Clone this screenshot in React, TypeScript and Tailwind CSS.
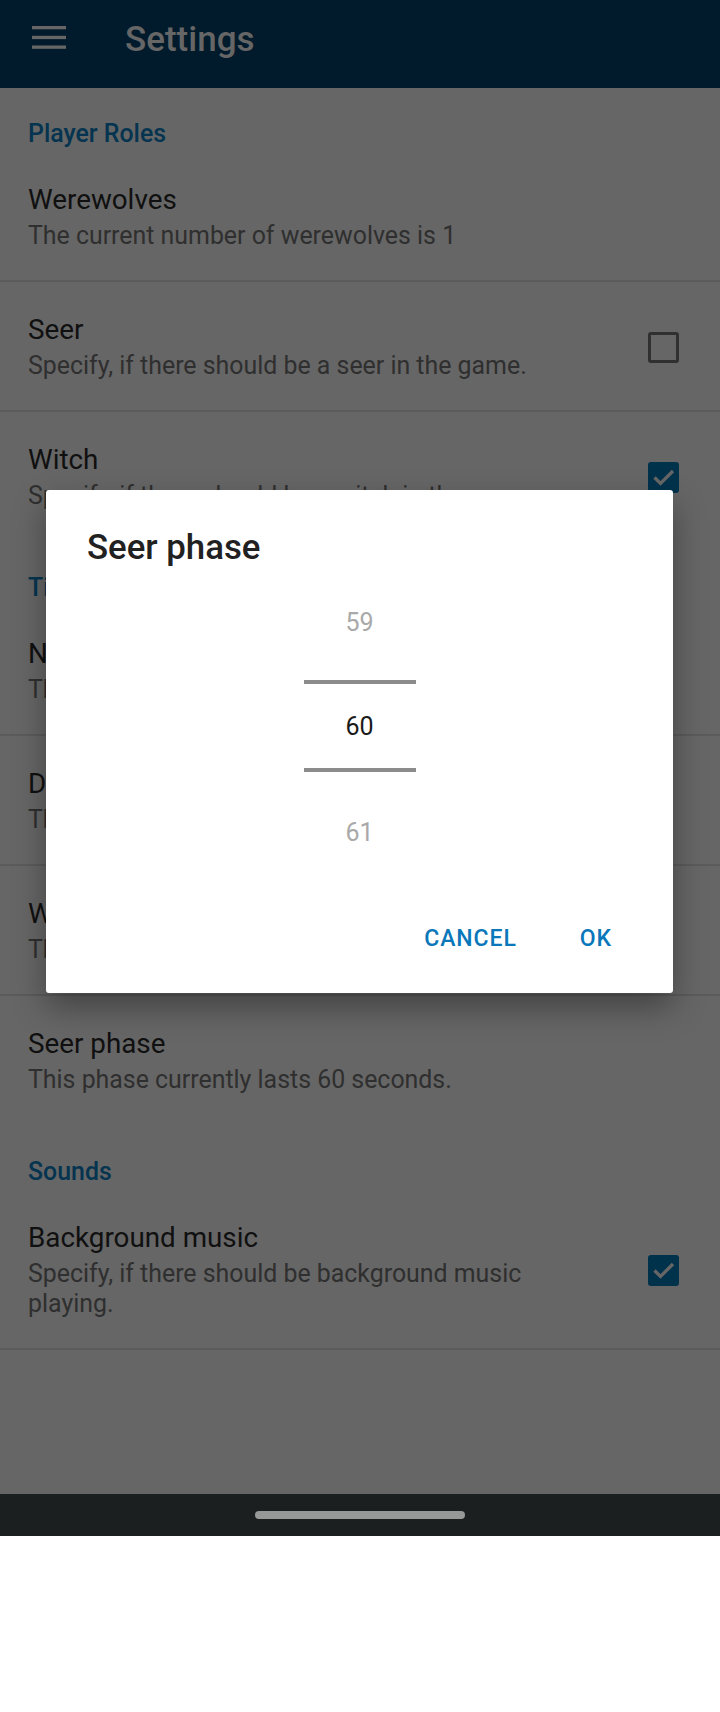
import React from 'react';

type Pref = {
  title: string;
  summary: string;
  checked?: boolean;
  divider: boolean;
};

type Section = {
  name: string;
  items: Pref[];
};

const sections: Section[] = [
  {
    name: 'Player Roles',
    items: [
      { title: 'Werewolves', summary: 'The current number of werewolves is 1', divider: true },
      { title: 'Seer', summary: 'Specify, if there should be a seer in the game.', checked: false, divider: true },
      { title: 'Witch', summary: 'Specify, if there should be a witch in the game.', checked: true, divider: false },
    ],
  },
  {
    name: 'Timers',
    items: [
      { title: 'Night phase', summary: 'This phase currently lasts 30 seconds.', divider: true },
      { title: 'Day phase', summary: 'This phase currently lasts 120 seconds.', divider: true },
      { title: 'Werewolf phase', summary: 'This phase currently lasts 60 seconds.', divider: true },
      { title: 'Seer phase', summary: 'This phase currently lasts 60 seconds.', divider: false },
    ],
  },
  {
    name: 'Sounds',
    items: [
      {
        title: 'Background music',
        summary: 'Specify, if there should be background music playing.',
        checked: true,
        divider: true,
      },
    ],
  },
];

const CheckBox: React.FC<{ checked: boolean }> = ({ checked }) =>
  checked ? (
    <div className="w-[31px] h-[31px] rounded-[3px] bg-[#01324c] flex items-center justify-center shrink-0">
      <svg width="31" height="31" viewBox="0 0 31 31">
        <path d="M6.5 15.5 L12.5 21.5 L25 9" fill="none" stroke="#666666" strokeWidth="3.3" />
      </svg>
    </div>
  ) : (
    <div className="w-[31px] h-[31px] rounded-[3px] border-[3px] border-[#303030] shrink-0" />
  );

const PrefRow: React.FC<{ pref: Pref }> = ({ pref }) => (
  <>
    <div className="flex items-center pl-[28px] pr-[41px] pt-[31px] pb-[29px]">
      <div className="flex-1 min-w-0 pr-[56px]">
        <div className="text-[27.8px] leading-[34px] text-[#101010]">{pref.title}</div>
        <div className="mt-[4px] text-[24.9px] leading-[30px] text-[#2f2f2f]">{pref.summary}</div>
      </div>
      {pref.checked !== undefined && <CheckBox checked={pref.checked} />}
    </div>
    <div className={pref.divider ? 'h-[2px] bg-[#5b5b5b]' : 'h-[2px]'} />
  </>
);

const App: React.FC = () => {
  return (
    <div className="relative w-[720px] h-[1712px] bg-white font-['Roboto',sans-serif]">
      <div className="h-[1536px] flex flex-col bg-[#666666]">
        {/* toolbar */}
        <div className="h-[88px] shrink-0 bg-[#011b2c] flex items-start">
          <svg className="ml-[32px] mt-[26px]" width="34" height="23" viewBox="0 0 34 23">
            <rect x="0" y="0" width="34" height="3.3" fill="#666666" />
            <rect x="0" y="9.8" width="34" height="3.3" fill="#666666" />
            <rect x="0" y="19.5" width="34" height="3.3" fill="#666666" />
          </svg>
          <div className="ml-[59px] mt-[20px] text-[35px] leading-[40px] font-medium text-[#666666]">
            Settings
          </div>
        </div>

        {/* preference list */}
        <div className="flex-1">
          {sections.map(section => (
            <div key={section.name}>
              <div className="pl-[28px] pt-[31px] pb-[3px] text-[24.9px] leading-[30px] font-medium text-[#04344f]">
                {section.name}
              </div>
              {section.items.map(item => (
                <PrefRow key={item.title} pref={item} />
              ))}
            </div>
          ))}
        </div>

        {/* navigation bar */}
        <div className="h-[42px] shrink-0 bg-[#1c1f20] flex items-center justify-center">
          <div className="w-[210px] h-[8px] rounded-full bg-[#969897]" />
        </div>
      </div>

      {/* dialog */}
      <div className="absolute left-[46px] top-[490px] w-[627px] bg-white rounded-[3px] shadow-[0_14px_32px_rgba(0,0,0,0.35)] flex flex-col">
        <div className="pl-[41px] pt-[37px] text-[34.8px] leading-[40px] font-medium text-[#212121]">
          Seer phase
        </div>
        <div className="mt-[41px] flex flex-col items-center">
          <div className="h-[30px] text-[25px] leading-[30px] text-[#a9a9a9]">59</div>
          <div className="mt-[42px] w-[112px] h-[4px] bg-[#8c8c8c]" />
          <div className="h-[84px] pt-[1px] flex items-center text-[25px] leading-[30px] text-[#1a1a1a]">60</div>
          <div className="w-[112px] h-[4px] bg-[#8c8c8c]" />
          <div className="mt-[46px] h-[30px] text-[25px] leading-[30px] text-[#a9a9a9]">61</div>
        </div>
        <div className="mt-[67px] mb-[30px] h-[48px] flex items-center justify-end pr-[61px] gap-[63px]">
          <span className="text-[23px] font-medium tracking-[0.04em] text-[#0a77ba]">CANCEL</span>
          <span className="text-[23px] font-medium tracking-[0.04em] text-[#0a77ba]">OK</span>
        </div>
      </div>
    </div>
  );
};

export default App;
